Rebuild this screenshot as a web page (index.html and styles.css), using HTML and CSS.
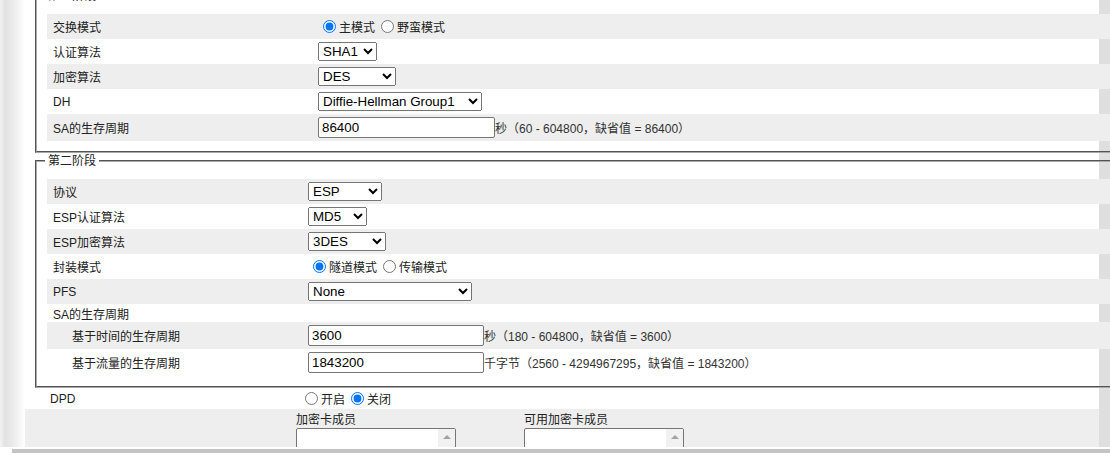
FILE: index.html
```html
<!DOCTYPE html>
<html lang="zh-CN">
<head>
    <meta charset="UTF-8">
    <meta name="viewport" content="width=device-width, initial-scale=1.0">
    <title>IKE 参数设置</title>
    <link rel="stylesheet" href="styles.css">
</head>
<body>
    <div class="page">
        <div class="side"></div>
        <div class="main">
            <fieldset class="stage stage-first">
                <legend>第一阶段</legend>
                <div class="row alt">
                    <div class="label">交换模式</div>
                    <div class="field">
                        <label class="choice"><input type="radio" name="mode" checked>主模式</label>
                        <label class="choice"><input type="radio" name="mode">野蛮模式</label>
                    </div>
                </div>
                <div class="row">
                    <div class="label">认证算法</div>
                    <div class="field">
                        <select class="sel-sha"><option>SHA1</option><option>MD5</option></select>
                    </div>
                </div>
                <div class="row alt">
                    <div class="label">加密算法</div>
                    <div class="field">
                        <select class="sel-des"><option>DES</option><option>3DES</option></select>
                    </div>
                </div>
                <div class="row">
                    <div class="label">DH</div>
                    <div class="field">
                        <select class="sel-wide"><option>Diffie-Hellman Group1</option><option>Diffie-Hellman Group2</option></select>
                    </div>
                </div>
                <div class="row alt tall">
                    <div class="label">SA的生存周期</div>
                    <div class="field">
                        <input type="text" class="text-input first-input" value="86400">
                        <span class="hint">秒（60 - 604800，缺省值 = 86400）</span>
                    </div>
                </div>
            </fieldset>

            <fieldset class="stage stage-second">
                <legend>第二阶段</legend>
                <div class="row alt">
                    <div class="label">协议</div>
                    <div class="field">
                        <select class="sel-esp"><option>ESP</option><option>AH</option></select>
                    </div>
                </div>
                <div class="row">
                    <div class="label">ESP认证算法</div>
                    <div class="field">
                        <select class="sel-sha"><option>MD5</option><option>SHA1</option></select>
                    </div>
                </div>
                <div class="row alt">
                    <div class="label">ESP加密算法</div>
                    <div class="field">
                        <select class="sel-des"><option>3DES</option><option>DES</option></select>
                    </div>
                </div>
                <div class="row">
                    <div class="label">封装模式</div>
                    <div class="field">
                        <label class="choice"><input type="radio" name="encap" checked>隧道模式</label>
                        <label class="choice"><input type="radio" name="encap">传输模式</label>
                    </div>
                </div>
                <div class="row alt">
                    <div class="label">PFS</div>
                    <div class="field">
                        <select class="sel-wide"><option>None</option><option>Group1</option></select>
                    </div>
                </div>
                <div class="row short">
                    <div class="label">SA的生存周期</div>
                </div>
                <div class="row alt tall sub">
                    <div class="label">基于时间的生存周期</div>
                    <div class="field">
                        <input type="text" class="text-input" value="3600">
                        <span class="hint">秒（180 - 604800，缺省值 = 3600）</span>
                    </div>
                </div>
                <div class="row tall sub">
                    <div class="label">基于流量的生存周期</div>
                    <div class="field">
                        <input type="text" class="text-input" value="1843200">
                        <span class="hint">千字节（2560 - 4294967295，缺省值 = 1843200）</span>
                    </div>
                </div>
            </fieldset>

            <div class="dpd-row">
                <div class="label">DPD</div>
                <div class="field">
                    <label class="choice"><input type="radio" name="dpd">开启</label>
                    <label class="choice"><input type="radio" name="dpd" checked>关闭</label>
                </div>
            </div>

            <div class="members">
                <div class="member-group">
                    <div class="member-title">加密卡成员</div>
                    <div class="member-box">
                        <div class="member-list"></div>
                        <div class="member-scroll"><span class="arrow-up"></span></div>
                    </div>
                </div>
                <div class="member-group">
                    <div class="member-title">可用加密卡成员</div>
                    <div class="member-box">
                        <div class="member-list"></div>
                        <div class="member-scroll"><span class="arrow-up"></span></div>
                    </div>
                </div>
            </div>
        </div>
    </div>
    <div class="hscroll"><div class="hscroll-thumb"></div></div>
</body>
</html>
```

FILE: styles.css
```css
html, body {
    margin: 0;
    padding: 0;
    overflow: hidden;
}

body {
    font-family: 'Liberation Sans', 'Noto Sans CJK SC', sans-serif;
    font-size: 12px;
    color: #222;
    background-color: #dfdfdf;
}

.page {
    display: flex;
    height: 453px;
}

.side {
    width: 25px;
    flex-shrink: 0;
    background: linear-gradient(to right, #f3f3f3 0, #e2e2e2 5px, #eaeaea 12px, #f6f6f6 20px, #fff 25px);
}

.main {
    width: 1074px;
    flex-shrink: 0;
    background-color: #fff;
}

.stage {
    width: 1063px;
    margin: 0 0 0 10px;
    padding: 10px 10px 10px 10px;
    border: 2px groove #a8a8a8;
    border-right: none;
}

.stage-first {
    margin-top: -12px;
}

.stage legend {
    margin-left: -2px;
    padding: 0 3px;
    line-height: 16px;
    font-size: 12px;
    color: #222;
}

.row {
    display: grid;
    grid-template-columns: 271px 1fr;
    align-items: center;
    height: 25px;
}

.stage-second .row {
    grid-template-columns: 261px 1fr;
}

.row.alt {
    background-color: #edeeed;
}

.row.tall {
    height: 27px;
}

.row.short {
    height: 18px;
}

.label {
    padding-left: 6px;
    white-space: nowrap;
}

.row.sub .label {
    padding-left: 25px;
}

.field {
    display: flex;
    align-items: center;
    white-space: nowrap;
}

.choice {
    display: inline-flex;
    align-items: center;
    margin-right: 1px;
}

.choice input {
    margin: 0 3px 0 5px;
    width: 13px;
    height: 13px;
}

select {
    font-family: 'Liberation Sans', sans-serif;
    font-size: 13.33px;
    color: #000;
    height: 19px;
    margin: 0;
}

.sel-sha {
    width: 59px;
}

.sel-des {
    width: 78px;
}

.sel-esp {
    width: 74px;
}

.sel-wide {
    width: 164px;
}

.text-input {
    box-sizing: border-box;
    width: 176px;
    height: 21px;
    margin: 0;
    padding: 1px 3px;
    border: 1px solid #767676;
    border-radius: 2px;
    font-family: 'Liberation Sans', sans-serif;
    font-size: 13.33px;
    color: #000;
}

.first-input {
    width: 177px;
}

.hint {
    color: #333;
}

.dpd-row {
    display: grid;
    grid-template-columns: 250px 1fr;
    align-items: center;
    height: 21px;
    padding-left: 25px;
}

.dpd-row .label {
    padding-left: 0;
}

.members {
    display: flex;
    gap: 68px;
    height: 41px;
    padding: 3px 0 0 271px;
    box-sizing: border-box;
    background-color: #edeeed;
    overflow: hidden;
}

.member-group {
    width: 160px;
}

.member-title {
    line-height: 16px;
    color: #222;
}

.member-box {
    display: flex;
    box-sizing: border-box;
    width: 160px;
    height: 30px;
    border: 1px solid #767676;
    border-radius: 2px;
    background-color: #fff;
}

.member-list {
    flex: 1;
}

.member-scroll {
    width: 17px;
    background-color: #f1f1f1;
    display: flex;
    justify-content: center;
    padding-top: 6px;
    box-sizing: border-box;
}

.arrow-up {
    width: 0;
    height: 0;
    border-left: 4px solid transparent;
    border-right: 4px solid transparent;
    border-bottom: 4px solid #a3a3a3;
}

.hscroll {
    position: fixed;
    left: 0;
    right: 0;
    bottom: 0;
    height: 6px;
    background-color: #fff;
}

.hscroll-thumb {
    position: absolute;
    left: 12px;
    right: 0;
    bottom: 0;
    height: 4px;
    background-color: #c4c4c4;
}
```
